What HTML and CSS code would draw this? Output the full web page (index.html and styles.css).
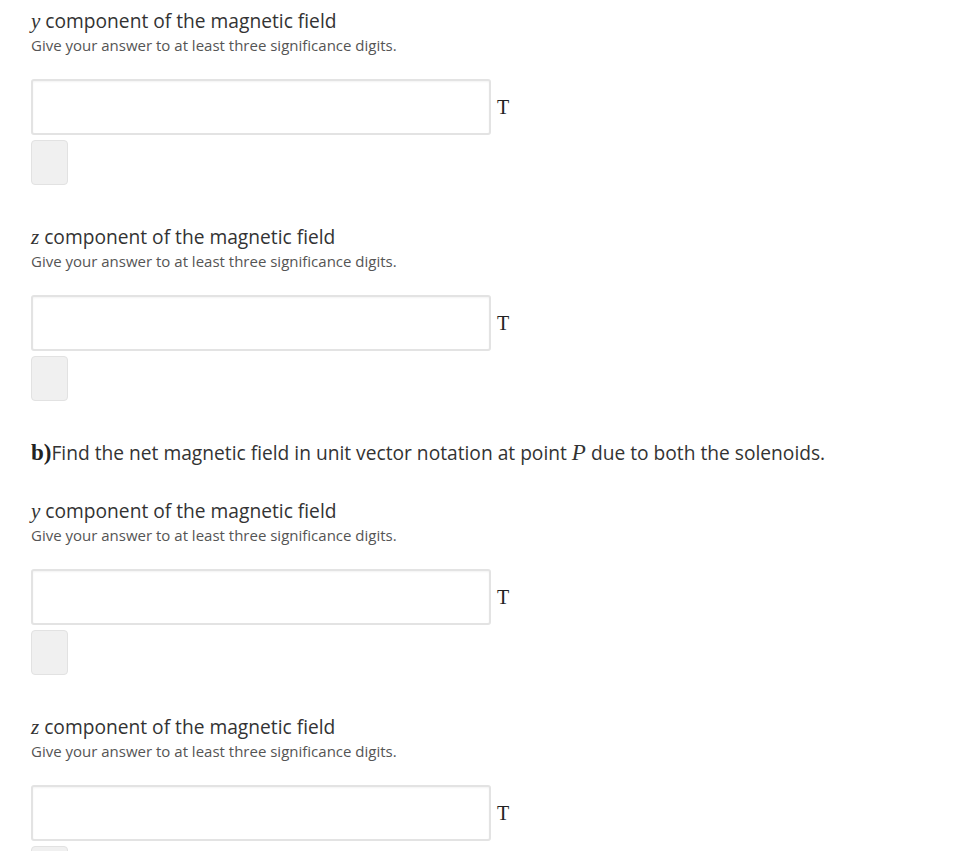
FILE: index.html
```html
<!DOCTYPE html>
<html>
<head>
<meta charset="utf-8">
<link rel="stylesheet" href="styles.css">
</head>
<body>
<div class="page">
  <div class="part">
    <div class="label"><span class="mi">y</span> component of the magnetic field</div>
    <div class="hint">Give your answer to at least three significance digits.</div>
    <div class="answer"><div class="field"></div><span class="unit">T</span></div>
    <div class="check"></div>
  </div>
  <div class="part">
    <div class="label"><span class="mi">z</span> component of the magnetic field</div>
    <div class="hint">Give your answer to at least three significance digits.</div>
    <div class="answer"><div class="field"></div><span class="unit">T</span></div>
    <div class="check"></div>
  </div>
  <div class="question"><span class="qnum">b)</span>Find the net magnetic field in unit vector notation at point <span class="mi big">P</span> due to both the solenoids.</div>
  <div class="part">
    <div class="label"><span class="mi">y</span> component of the magnetic field</div>
    <div class="hint">Give your answer to at least three significance digits.</div>
    <div class="answer"><div class="field"></div><span class="unit">T</span></div>
    <div class="check"></div>
  </div>
  <div class="part">
    <div class="label"><span class="mi">z</span> component of the magnetic field</div>
    <div class="hint">Give your answer to at least three significance digits.</div>
    <div class="answer"><div class="field"></div><span class="unit">T</span></div>
    <div class="check"></div>
  </div>
</div>
</body>
</html>
```
FILE: styles.css
```css
html, body { margin: 0; padding: 0; background: #fff; }
.page {
  padding: 7px 0 0 31px;
  font-family: "Open Sans", "Noto Sans", sans-serif;
  color: #333;
  height: 844px;
  overflow: hidden;
}
.part { margin-bottom: 38px; }
.label { font-size: 19.2px; line-height: 28px; color: #333; }
.hint { font-size: 15px; line-height: 21px; color: #555; }
.mi { font-family: "Liberation Serif", "DejaVu Serif", serif; font-style: italic; font-size: 21px; }
.mi.big { font-size: 23px; }
.answer { display: flex; align-items: center; margin-top: 23px; }
.field {
  width: 456px; height: 52px;
  border: 2px solid #e3e3e3; border-radius: 3px;
  box-shadow: inset 0 1px 2px rgba(0,0,0,0.05);
  background: #fff;
}
.unit {
  margin-left: 6px;
  font-family: "Liberation Serif", "DejaVu Serif", serif;
  font-size: 20px; color: #222;
}
.check {
  margin-top: 5px;
  width: 35px; height: 43px;
  background: #f0f0f0; border: 1px solid #e2e2e2; border-radius: 4px;
}
.question { font-size: 19.2px; line-height: 28px; margin: 0 0 30px; color: #333; }
.qnum { font-family: "Liberation Serif", serif; font-weight: bold; font-size: 23px; color: #222; }
```
